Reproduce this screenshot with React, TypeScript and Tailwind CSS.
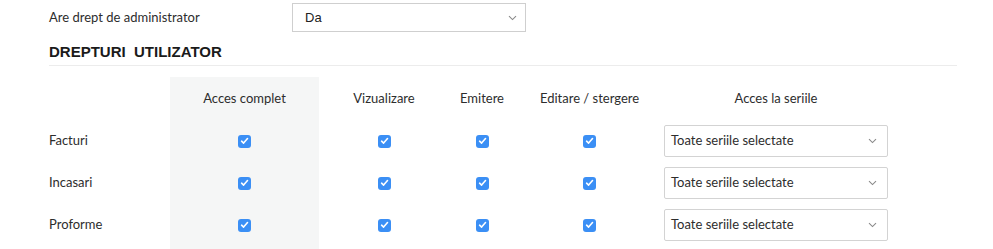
import React from 'react';

const rows = ['Facturi', 'Incasari', 'Proforme'];

const Chevron = () => (
  <svg width="9" height="6" viewBox="0 0 9 6" fill="none" className="shrink-0">
    <path d="M1 1.2 L4.5 4.6 L8 1.2" stroke="#8a8a8a" strokeWidth="1.1" />
  </svg>
);

const Check = () => (
  <span className="w-[13px] h-[13px] rounded-[3px] bg-[#3b8ff5] flex items-center justify-center">
    <svg width="9" height="8" viewBox="0 0 9 8" fill="none">
      <path d="M1.6 4.2 L3.6 6.1 L7.5 1.6" stroke="white" strokeWidth="1.6" strokeLinecap="round" strokeLinejoin="round" />
    </svg>
  </span>
);

const SeriesSelect = () => (
  <div className="w-[224px] h-[32px] border border-[#d3d3d3] rounded-[2px] bg-white flex items-center justify-between pl-[6px] pr-[10px] text-[13px] text-[#2d2d2d]">
    <span>Toate seriile selectate</span>
    <Chevron />
  </div>
);

export default function App() {
  return (
    <div className="bg-white pl-[49px] pt-[3px] font-['Lato',sans-serif] text-[#2d2d2d]">
      {/* admin row */}
      <div className="flex items-center h-[29px]">
        <div className="w-[243px] text-[13px]">Are drept de administrator</div>
        <div className="w-[234px] h-[29px] border border-[#cfcfcf] flex items-center justify-between pl-[12px] pr-[8px] font-['Liberation_Sans',Arial,sans-serif] text-[13px] text-[#222]">
          <span>Da</span>
          <Chevron />
        </div>
      </div>

      <div className="w-[908px] mt-[12px] pb-[5px] border-b border-[#ececec]">
        <h2 className="font-['Liberation_Sans',Arial,sans-serif] font-bold text-[15px] leading-[16px] text-[#1a1a1a] whitespace-pre">
          DREPTURI  UTILIZATOR
        </h2>
      </div>

      {/* permissions table */}
      <div className="mt-[11px] grid grid-cols-[121px_149px_130px_66px_149px_224px] text-[13px]">
        <div className="h-[43px]"></div>
        <div className="h-[43px] bg-[#f5f6f6] flex items-center justify-center">Acces complet</div>
        <div className="h-[43px] flex items-center justify-center">Vizualizare</div>
        <div className="h-[43px] flex items-center justify-center">Emitere</div>
        <div className="h-[43px] flex items-center justify-center">Editare / stergere</div>
        <div className="h-[43px] flex items-center justify-center">Acces la seriile</div>

        {rows.map((r) => (
          <React.Fragment key={r}>
            <div className="h-[42px] flex items-center">{r}</div>
            <div className="h-[42px] bg-[#f5f6f6] flex items-center justify-center"><Check /></div>
            <div className="h-[42px] flex items-center justify-center"><Check /></div>
            <div className="h-[42px] flex items-center justify-center"><Check /></div>
            <div className="h-[42px] flex items-center justify-center"><Check /></div>
            <div className="h-[42px] flex items-center"><SeriesSelect /></div>
          </React.Fragment>
        ))}

        <div className="h-[12px]"></div>
        <div className="h-[12px] bg-[#f5f6f6]"></div>
      </div>
    </div>
  );
}
